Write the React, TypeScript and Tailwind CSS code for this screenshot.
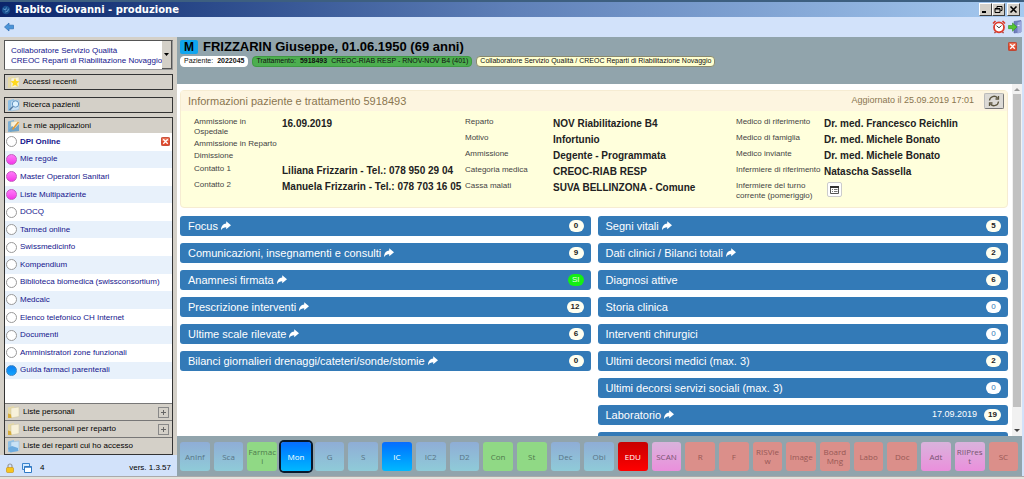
import { useState } from "react";
import type { ReactNode } from "react";
import { clsx } from "clsx";

type App = { name: string; dot?: "pink" | "blue"; open?: boolean };
type Row = { label: string; value?: ReactNode; height: string };
type Section = { title: string; count: string; link?: boolean; tone?: "green" | "muted"; date?: string };

const apps: App[] = [
  { name: "DPI Online", open: true },
  { name: "Mie regole", dot: "pink" },
  { name: "Master Operatori Sanitari", dot: "pink" },
  { name: "Liste Multipaziente", dot: "pink" },
  { name: "DOCQ" },
  { name: "Tarmed online" },
  { name: "Swissmedicinfo" },
  { name: "Kompendium" },
  { name: "Biblioteca biomedica (swissconsortium)" },
  { name: "Medcalc" },
  { name: "Elenco telefonico CH Internet" },
  { name: "Documenti" },
  { name: "Amministratori zone funzionali" },
  { name: "Guida farmaci parenterali", dot: "blue" },
];

const leftSections: Section[] = [
  { title: "Focus", count: "0", link: true },
  { title: "Comunicazioni, insegnamenti e consulti", count: "9", link: true },
  { title: "Anamnesi firmata", count: "SI", link: true, tone: "green" },
  { title: "Prescrizione interventi", count: "12", link: true },
  { title: "Ultime scale rilevate", count: "6", link: true },
  { title: "Bilanci giornalieri drenaggi/cateteri/sonde/stomie", count: "0", link: true },
];

const rightSections: Section[] = [
  { title: "Segni vitali", count: "5", link: true },
  { title: "Dati clinici / Bilanci totali", count: "2", link: true },
  { title: "Diagnosi attive", count: "6" },
  { title: "Storia clinica", count: "0", tone: "muted" },
  { title: "Interventi chirurgici", count: "0", tone: "muted" },
  { title: "Ultimi decorsi medici (max. 3)", count: "2" },
  { title: "Ultimi decorsi servizi sociali (max. 3)", count: "0", tone: "muted" },
  { title: "Laboratorio", count: "19", link: true, date: "17.09.2019" },
];

const tones = {
  sky: "bg-linear-to-b from-[#8fadd6] to-[#8fcbd8] text-[#587486]",
  green: "bg-[#90d985] text-[#4f7a4c]",
  active: "bg-linear-to-b from-[#0a6cff] to-[#00b8ff] text-white",
  red: "bg-linear-to-b from-[#c80000] to-[#ff0000] text-white",
  pink: "bg-linear-to-b from-[#d9b3dc] to-[#ea8fdc] text-[#775570]",
  salmon: "bg-[#db8f8a] text-[#975855]",
};

const modules: { name: string; tone: keyof typeof tones; selected?: boolean }[] = [
  { name: "AnInf", tone: "sky" },
  { name: "Sca", tone: "sky" },
  { name: "Farmaci", tone: "green" },
  { name: "Mon", tone: "active", selected: true },
  { name: "G", tone: "sky" },
  { name: "S", tone: "sky" },
  { name: "IC", tone: "active" },
  { name: "IC2", tone: "sky" },
  { name: "D2", tone: "sky" },
  { name: "Con", tone: "green" },
  { name: "St", tone: "green" },
  { name: "Dec", tone: "sky" },
  { name: "Obi", tone: "sky" },
  { name: "EDU", tone: "red" },
  { name: "SCAN", tone: "pink" },
  { name: "R", tone: "salmon" },
  { name: "F", tone: "salmon" },
  { name: "RISView", tone: "salmon" },
  { name: "Image", tone: "salmon" },
  { name: "Board Mng", tone: "salmon" },
  { name: "Labo", tone: "salmon" },
  { name: "Doc", tone: "salmon" },
  { name: "Adt", tone: "pink" },
  { name: "RIIPrest", tone: "pink" },
  { name: "SC", tone: "salmon" },
];

function CloseIcon({ className }: { className?: string }) {
  return (
    <svg viewBox="0 0 10 10" className={className} aria-hidden>
      <rect x="0.5" y="0.5" width="9" height="9" rx="1" fill="#e2492c" stroke="#c0402a" />
      <path d="M1 1h8v3.500H1z" fill="#f08a70" opacity=".6" />
      <path d="M2.500 2.500l5 5M7.500 2.500l-5 5" stroke="#fff" strokeWidth="1.500" />
    </svg>
  );
}

function ShareIcon() {
  return (
    <svg viewBox="0 0 10 10" className="size-2.5 shrink-0" aria-hidden>
      <path d="M5.200.3L10 4.300 5.200 8.300V6.300C3 6.300 1.300 7 0 9.200 0 5.200 2 2.600 5.200 2.400z" fill="#fff" />
    </svg>
  );
}

function FolderIcon({ kind }: { kind: "star" | "search" | "pen" | "note" | "blue" }) {
  const blue = kind === "search" || kind === "blue";
  return (
    <svg viewBox="0 0 14 14" className="size-3.5 shrink-0" aria-hidden>
      <path d="M1 2.500l6-1.500v11l-6 1z" fill={blue ? "#8fc0e6" : kind === "pen" ? "#7fb0d4" : "#e6d9a4"} />
      <path d="M4 3l8-1v9.500l-8 1.500z" fill={blue ? "#c9e2f6" : "#f7f1da"} stroke={blue ? "#8db4d4" : "#cfc59c"} strokeWidth=".5" />
      {kind === "star" && <path d="M8 3l1.300 3 3.200.3-2.400 2.100.8 3.200L8 10l-2.800 1.600.8-3.200-2.500-2.100L6.700 6z" fill="#ffd91e" />}
      {kind === "search" && (
        <>
          <path d="M6 8.500l-3.500 3.500" stroke="#54779c" strokeWidth="1.500" />
          <circle cx="8.500" cy="6" r="3.200" fill="#dcf1ff" stroke="#5f93c2" />
        </>
      )}
      {kind === "pen" && (
        <>
          <path d="M2 11l3-4 3 2 4-4v7l-9 1z" fill="#6fa3c8" />
          <path d="M5.500 10.500l6-7.500" stroke="#e09a35" strokeWidth="1.600" />
        </>
      )}
      {kind === "note" && <path d="M1 8.500l3 1 .5 3.500H1z" fill="#d6ac3c" />}
      {kind === "blue" && <path d="M1 9l4-2 6 2v3l-8 1.500z" fill="#6cabe0" />}
    </svg>
  );
}

function TitleBar() {
  const box =
    "flex h-[13px] w-[13px] items-center justify-center border border-t-white border-l-white border-r-[#404040] border-b-[#404040] bg-[#d4d0c8]";
  return (
    <header className="flex h-[17px] shrink-0 items-center gap-1 border-t-2 border-[#3d5f80] bg-linear-to-r from-[#0b256b] via-[#5f80b8] to-[#a6caf0] pr-1 pl-px">
      <svg viewBox="0 0 12 12" className="size-2.5 shrink-0" aria-hidden>
        <circle cx="6" cy="6" r="5" fill="#174f8f" />
        <path d="M2.500 4.500l3 1.500 1-3M5 8.500l3-1 1-3" stroke="#6fa6da" fill="none" />
      </svg>
      <h1 className="flex-1 font-['DejaVu_Sans'] text-[10px] leading-none font-bold whitespace-nowrap text-white">
        Rabito Giovanni - produzione
      </h1>
      <div className="flex">
        <button className={box} aria-label="Riduci">
          <svg viewBox="0 0 9 9" className="size-[9px]"><path d="M1 7h4" stroke="#000" strokeWidth="2" /></svg>
        </button>
        <button className={box} aria-label="Ripristina">
          <svg viewBox="0 0 9 9" className="size-[9px]" fill="none" stroke="#000">
            <path d="M3 3.500V1.500h5v4H6.500M3 1.500h5" />
            <path d="M1 3.500h5v4H1zM1 4h5" />
          </svg>
        </button>
        <button className={clsx(box, "ml-0.5")} aria-label="Chiudi">
          <svg viewBox="0 0 9 9" className="size-[9px]"><path d="M1.500 1.500l6 6M7.500 1.500l-6 6" stroke="#000" strokeWidth="1.600" /></svg>
        </button>
      </div>
    </header>
  );
}

function ToolBar() {
  return (
    <div className="flex h-5 shrink-0 items-center justify-between bg-[#d2e2fa] pr-0.5 pl-1">
      <button aria-label="Indietro">
        <svg viewBox="0 0 10 10" className="size-2.5">
          <path d="M.5 5L5 1v2.200h4.500v3.600H5V9z" fill="#4a94d8" stroke="#2f6fb4" strokeWidth=".7" />
        </svg>
      </button>
      <div className="flex gap-0.5">
        <button aria-label="Promemoria">
          <svg viewBox="0 0 14 14" className="size-3.5">
            <path d="M1 3.500l2.500-2.500M13 3.500l-2.500-2.500" stroke="#d8392b" strokeWidth="1.600" />
            <path d="M3.500 12l-1 1.200M10.500 12l1 1.200" stroke="#a52a20" strokeWidth="1.200" />
            <circle cx="7" cy="7.300" r="5" fill="#fff" stroke="#dd3b2c" strokeWidth="1.800" />
            <path d="M4.500 5.700L7 7.800l2.500-2.300" stroke="#444" fill="none" />
          </svg>
        </button>
        <button aria-label="Esci">
          <svg viewBox="0 0 14 14" className="size-3.5">
            <path d="M6 1.500l7-1v11.500l-7 1z" fill="#6f7fc0" stroke="#56639e" strokeWidth=".6" />
            <path d="M9.500 2.500l4-1.500v11l-4 1.800z" fill="#9aa7dc" />
            <path d="M9.500 5.500h2" stroke="#e8ecff" />
            <path d="M.5 5.500h4V3L9 7l-4.500 4.200V8.700h-4z" fill="#54c532" stroke="#2f8f22" strokeWidth=".6" />
          </svg>
        </button>
      </div>
    </div>
  );
}

function RolePicker() {
  return (
    <div className="relative flex h-[30px] border border-[#555] border-r-[#999] border-b-[#999] bg-white">
      <label htmlFor="role" className="min-w-0 flex-1 pt-[5px] pl-1.5 leading-[10px] whitespace-nowrap text-[#14148c]">
        Collaboratore Servizio Qualità
        <br />
        CREOC Reparti di Riabilitazione Novaggio
      </label>
      <span className="flex w-2.5 shrink-0 items-center justify-center border-r border-b border-[#555] bg-[#d4d0c8]">
        <svg viewBox="0 0 5 3" className="h-[3px] w-[5px]"><path d="M0 0h5L2.500 3z" /></svg>
      </span>
      <select id="role" className="absolute inset-0 h-full w-full cursor-pointer opacity-0">
        <option>Collaboratore Servizio Qualità</option>
      </select>
    </div>
  );
}

function SideButton({ icon, children, className }: { icon: "star" | "search"; children: ReactNode; className?: string }) {
  return (
    <button
      className={clsx("flex h-4 items-center gap-0.5 border border-[#333] bg-[#d4d0c8] pl-0.5 text-left text-black", className)}
    >
      <FolderIcon kind={icon} />
      {children}
    </button>
  );
}

function Sidebar() {
  const [selected, setSelected] = useState("DPI Online");

  return (
    <aside className="flex w-[177px] shrink-0 flex-col text-[8px]">
      <div className="flex min-h-0 flex-1 flex-col bg-[#d4d0c8] pt-[3px] pr-1 pl-1">
        <RolePicker />
        <SideButton icon="star" className="mt-1">Accessi recenti</SideButton>
        <SideButton icon="search" className="mt-[7px]">Ricerca pazienti</SideButton>

        <nav className="mt-1 flex min-h-0 flex-1 flex-col border border-[#333] bg-white">
          <h2 className="flex h-[15px] shrink-0 items-center gap-0.5 bg-[#d4d0c8] pl-0.5">
            <FolderIcon kind="pen" />
            Le mie applicazioni
          </h2>
          <ul className="flex max-h-[246px] flex-1 flex-col">
            {apps.map((app) => (
              <li key={app.name} className="flex flex-1 items-center pr-0.5 pl-px even:bg-[#e8f1fb]">
                <button
                  onClick={() => setSelected(app.name)}
                  className={clsx(
                    "flex flex-1 items-center gap-[3px] text-left whitespace-nowrap text-[#14148c]",
                    selected === app.name && "font-bold",
                  )}
                >
                  <span
                    className={clsx(
                      "size-[11px] shrink-0 rounded-full border",
                      !app.dot && "border-[#999] bg-white",
                      app.dot === "pink" && "border-[#c45bc0] bg-linear-to-b from-[#ff7af8] to-[#f531ea]",
                      app.dot === "blue" && "border-[#3b86c6] bg-linear-to-b from-[#0b7df0] to-[#13a4ff]",
                    )}
                  />
                  {app.name}
                </button>
                {app.open && (
                  <button aria-label="Chiudi DPI Online">
                    <CloseIcon className="size-[9px]" />
                  </button>
                )}
              </li>
            ))}
          </ul>
          <div className="mt-auto flex flex-col">
            {["Liste personali", "Liste personali per reparto", "Liste dei reparti cui ho accesso"].map((name, i) => (
              <div key={name} className="flex h-[17px] items-center border-t border-[#777] bg-[#d4d0c8] pr-[3px] pl-0.5">
                <button className="flex flex-1 items-center gap-0.5 text-left">
                  <FolderIcon kind={i === 2 ? "blue" : "note"} />
                  {name}
                </button>
                {i < 2 && (
                  <button aria-label={"Espandi " + name} className="flex size-[11px] items-center justify-center border border-[#888]">
                    <svg viewBox="0 0 5 5" className="size-[5px]"><path d="M0 2.500h5M2.500 0v5" stroke="#666" /></svg>
                  </button>
                )}
              </div>
            ))}
          </div>
        </nav>
      </div>

      <footer className="flex h-[21px] shrink-0 items-center bg-[#d2e2fa] pt-1 pr-1.5 pl-1.5">
        <svg viewBox="0 0 8 10" className="h-2.5 w-2" aria-hidden>
          <path d="M2 5V3a2 2 0 014 0v2" fill="none" stroke="#999" strokeWidth="1.200" />
          <rect x=".5" y="4.500" width="7" height="5" rx="1" fill="#f7c51d" stroke="#c58b12" strokeWidth=".6" />
        </svg>
        <svg viewBox="0 0 10 10" className="ml-2 size-2.5" aria-hidden>
          <path d="M.5.500h7v6h-7z" fill="#d5ebff" stroke="#3b84cc" />
          <path d="M2.500 3.500h7v6h-7z" fill="#fff" stroke="#2f78c4" />
          <path d="M2.500 4h7" stroke="#2f78c4" strokeWidth="1.500" />
        </svg>
        <span className="ml-2 flex-1">4</span>
        <span>vers. 1.3.57</span>
      </footer>
    </aside>
  );
}

function PatientHeader() {
  const tag = "flex h-[11px] items-center rounded-sm border px-[3px] text-[7px] whitespace-nowrap text-[#111]";
  return (
    <div className="flex h-[47px] shrink-0 justify-between bg-[#91a4ac] pt-[3px] pr-[5px] pl-[3px]">
      <div className="flex flex-col gap-0.5">
        <div className="flex items-center gap-[5px]">
          <span className="flex h-3.5 w-[18px] items-center justify-center rounded-xs bg-[#10a5ee] text-xs font-bold">M</span>
          <h2 className="text-[13px] leading-[14px] font-bold text-black">FRIZZARIN Giuseppe, 01.06.1950 (69 anni)</h2>
        </div>
        <div className="flex gap-1">
          <span className={clsx(tag, "gap-1 border-white bg-white")}>
            Paziente: <b>2022045</b>
          </span>
          <span className={clsx(tag, "gap-1 border-[#3f9a43] bg-[#4cae4f]")}>
            Trattamento: <b>5918493</b> CREOC-RIAB RESP - RNOV-NOV B4 (401)
          </span>
          <span className={clsx(tag, "border-[#8a8a70] bg-[#ffffcf]")}>
            Collaboratore Servizio Qualità / CREOC Reparti di Riabilitazione Novaggio
          </span>
        </div>
      </div>
      <button className="mt-0.5 self-start" aria-label="Chiudi paziente">
        <CloseIcon className="size-[9px]" />
      </button>
    </div>
  );
}

function InfoColumn({ rows }: { rows: Row[] }) {
  return (
    <dl className="flex flex-1 flex-col">
      {rows.map((row) => (
        <div key={row.label} className={clsx("flex", row.height)}>
          <dt className="w-[88px] shrink-0 pt-px text-[8px] leading-[10px] text-[#444]">{row.label}</dt>
          <dd className="pt-0.5 text-[10px] leading-3 font-bold whitespace-nowrap text-[#222]">{row.value}</dd>
        </div>
      ))}
    </dl>
  );
}

function InfoPanel() {
  return (
    <section className="mr-0.5 rounded-sm border border-[#f6ecd2] bg-[#ffffdc]">
      <div className="flex h-5 items-center bg-[#fdf5e0] pr-[3px] pl-[7px] text-[#8a7550]">
        <h3 className="flex-1 text-[11px]">Informazioni paziente e trattamento 5918493</h3>
        <span className="text-[9px]">Aggiornato il 25.09.2019 17:01</span>
        <button
          aria-label="Aggiorna"
          className="ml-2.5 flex h-4 w-5 items-center justify-center rounded-xs border border-[#bbb] border-r-[#777] border-b-[#777] bg-[#dcdad6]"
        >
          <svg viewBox="0 0 12 12" className="size-3" fill="none" stroke="#5c5640" strokeWidth="1.300">
            <path d="M1.500 5.500A4.500 4.500 0 019.500 3M10.500 6.500A4.500 4.500 0 012.500 9" />
            <path d="M10.500 1v3h-3M1.500 11V8h3" />
          </svg>
        </button>
      </div>
      <div className="flex pt-[5px] pb-[5px] pl-[13px]">
        <InfoColumn
          rows={[
            { label: "Ammissione in Ospedale", value: "16.09.2019", height: "h-[22px]" },
            { label: "Ammissione in Reparto", height: "h-3" },
            { label: "Dimissione", height: "h-[13px]" },
            { label: "Contatto 1", value: "Liliana Frizzarin - Tel.: 078 950 29 04", height: "h-4" },
            { label: "Contatto 2", value: "Manuela Frizzarin - Tel.: 078 703 16 05", height: "h-4" },
          ]}
        />
        <InfoColumn
          rows={[
            { label: "Reparto", value: "NOV Riabilitazione B4", height: "h-4" },
            { label: "Motivo", value: "Infortunio", height: "h-4" },
            { label: "Ammissione", value: "Degente - Programmata", height: "h-4" },
            { label: "Categoria medica", value: "CREOC-RIAB RESP", height: "h-4" },
            { label: "Cassa malati", value: "SUVA BELLINZONA - Comune", height: "h-4" },
          ]}
        />
        <InfoColumn
          rows={[
            { label: "Medico di riferimento", value: "Dr. med. Francesco Reichlin", height: "h-4" },
            { label: "Medico di famiglia", value: "Dr. med. Michele Bonato", height: "h-4" },
            { label: "Medico inviante", value: "Dr. med. Michele Bonato", height: "h-4" },
            { label: "Infermiere di riferimento", value: "Natascha Sassella", height: "h-4" },
            {
              label: "Infermiere del turno corrente (pomeriggio)",
              height: "h-[22px]",
              value: (
                <button aria-label="Dettaglio turno" className="ml-[3px] flex size-[15px] items-center justify-center rounded-xs border border-[#ccc] bg-white">
                  <svg viewBox="0 0 9 8" className="h-2 w-[9px]">
                    <path d="M.5.500h8v7h-8z" fill="#fff" stroke="#555" />
                    <path d="M0 1h9" stroke="#333" strokeWidth="2" />
                    <path d="M2 3.500h1M4 3.500h3.500M2 5.500h1M4 5.500h3.500" stroke="#777" />
                  </svg>
                </button>
              ),
            },
          ]}
        />
      </div>
    </section>
  );
}

function SectionBar({ title, count, link, tone, date }: Section) {
  return (
    <button className="flex h-5 w-full shrink-0 items-center gap-[3px] rounded-[3px] bg-[#337ab7] pr-[7px] pl-2 text-left text-[11px] text-white">
      {title}
      {link && <ShareIcon />}
      {date && <span className="ml-auto text-[9px]">{date}</span>}
      <span
        className={clsx(
          "flex h-3 min-w-[15px] items-center justify-center rounded-full px-1 text-[8px] font-bold",
          date ? "ml-1" : "ml-auto",
          !tone && "bg-[#fffff0] text-[#222]",
          tone === "green" && "bg-[#14f014] font-normal text-[#eaffea]",
          tone === "muted" && "bg-white font-normal text-[#337ab7]",
        )}
      >
        {count}
      </span>
    </button>
  );
}

function ScrollBar() {
  return (
    <div className="flex w-2.5 shrink-0 flex-col items-center bg-[#f1f1f1] pt-1 pb-1" aria-hidden>
      <svg viewBox="0 0 6 3" className="h-[3px] w-1.5"><path d="M0 3h6L3 0z" fill="#999" /></svg>
      <div className="mt-[3px] mb-[22px] w-2 flex-1 bg-[#c1c1c1]" />
      <svg viewBox="0 0 6 3" className="h-[3px] w-1.5"><path d="M0 0h6L3 3z" fill="#444" /></svg>
    </div>
  );
}

export default function App() {
  return (
    <div className="flex h-screen flex-col overflow-hidden bg-[#d4d0c8] font-['Liberation_Sans',Arial,sans-serif] text-black">
      <TitleBar />
      <ToolBar />
      <div className="flex min-h-0 flex-1">
        <Sidebar />
        <main className="flex min-w-0 flex-1 flex-col border-r-2 border-[#d2e2fa]">
          <PatientHeader />
          <div className="flex min-h-0 flex-1 bg-white">
            <div className="min-w-0 flex-1 overflow-hidden pt-1.5 pr-0.5 pl-[3px]">
              <InfoPanel />
              <div className="mt-2 mr-0.5 grid grid-cols-2 gap-[7px]">
                <div className="flex flex-col gap-[7px]">
                  {leftSections.map((s) => (
                    <SectionBar key={s.title} {...s} />
                  ))}
                </div>
                <div className="flex flex-col gap-[7px]">
                  {rightSections.map((s) => (
                    <SectionBar key={s.title} {...s} />
                  ))}
                  <div className="h-5 rounded-[3px] bg-[#337ab7]" />
                </div>
              </div>
            </div>
            <ScrollBar />
          </div>
          <nav className="flex h-10 shrink-0 items-center gap-1 bg-[#91a4ac] pr-1 pl-[3px]">
            {modules.map((m) => (
              <button
                key={m.name}
                className={clsx(
                  "flex h-[29px] min-w-0 flex-1 items-center justify-center rounded-[3px] px-px text-center font-['Open_Sans','Noto_Sans',sans-serif] text-[8px] leading-[9px] break-all",
                  tones[m.tone],
                  m.selected && "ring-2 ring-[#06182c]",
                )}
              >
                <span className="min-w-0">{m.name}</span>
              </button>
            ))}
          </nav>
        </main>
      </div>
      <div className="h-[3px] shrink-0 border-t border-[#aaa] bg-[#e4e2dc]" />
    </div>
  );
}
